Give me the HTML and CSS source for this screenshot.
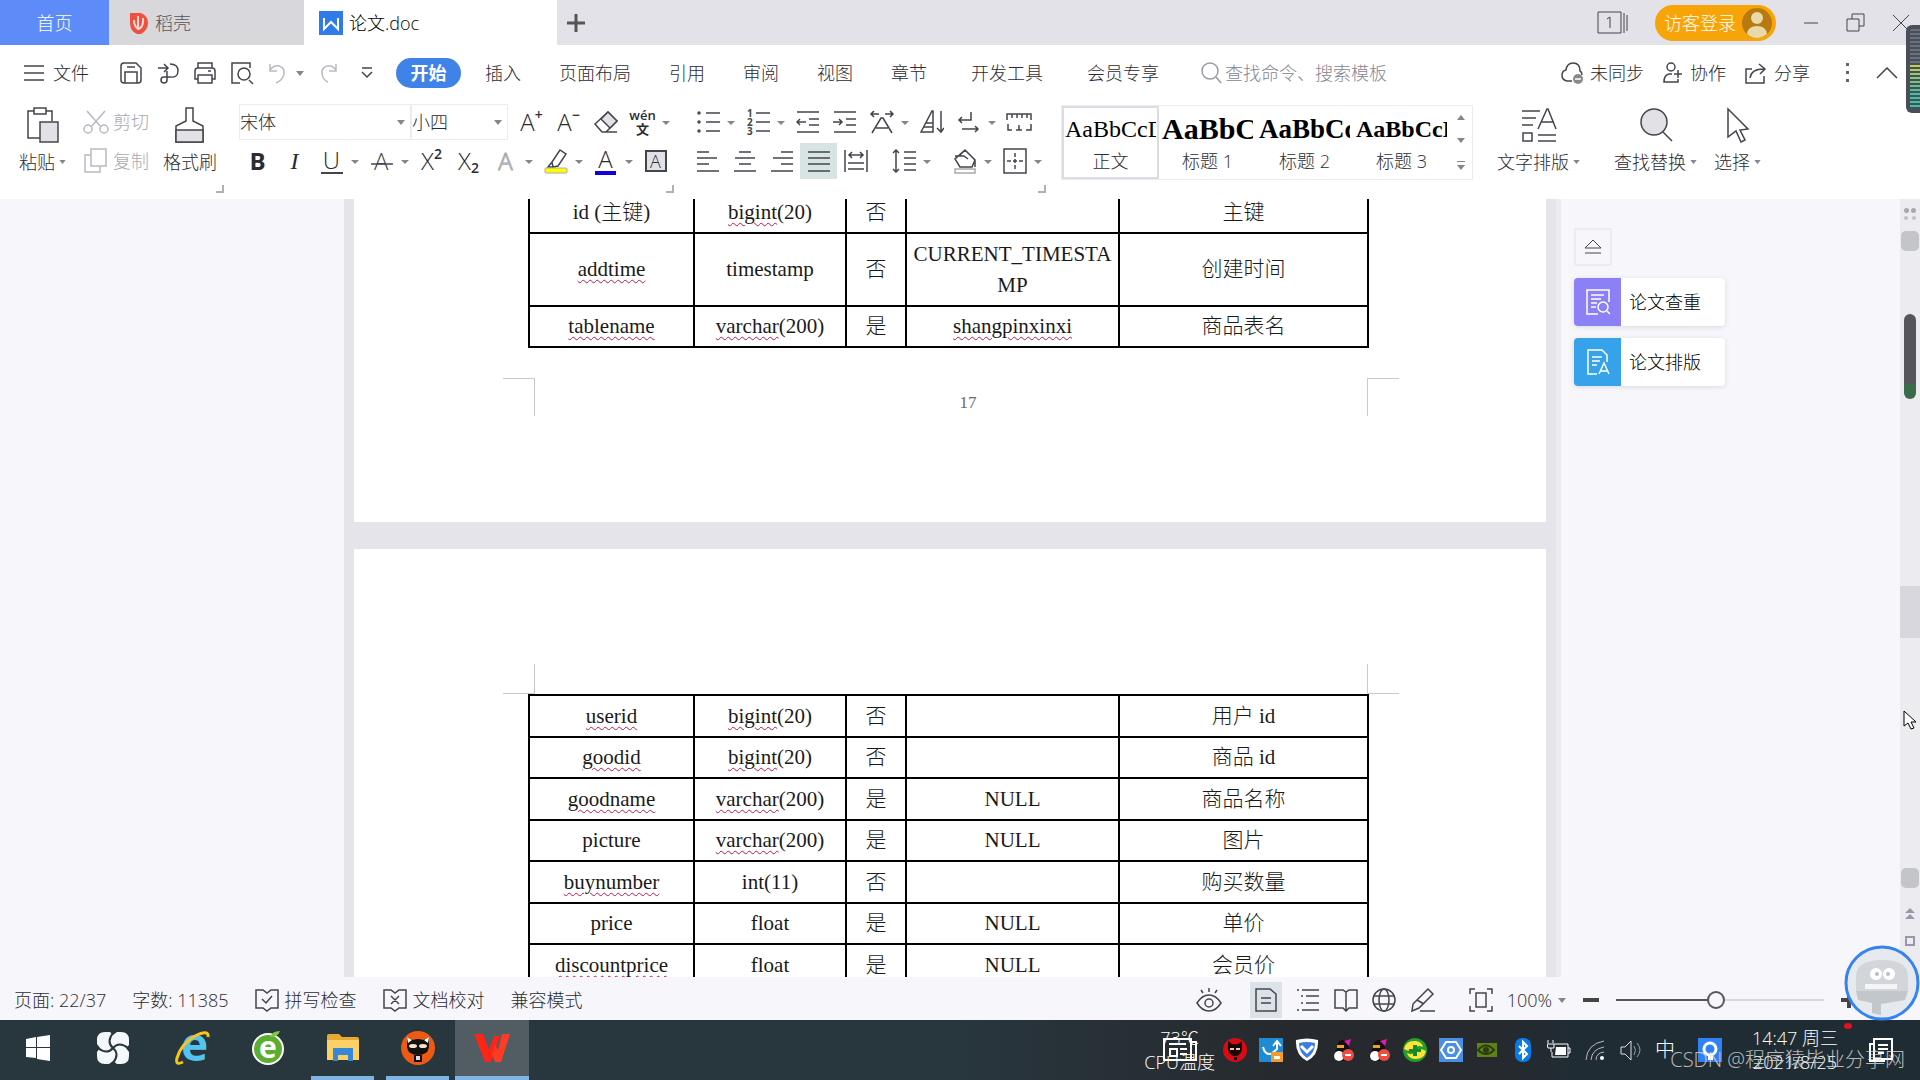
FILE: index.html
```
<!DOCTYPE html>
<html lang="zh-CN">
  <head>
    <meta charset="utf-8">
    <title>论文.doc</title>
    <link rel="stylesheet" href="styles.css">
  </head>

  <body>
    <header class="titlebar">
      <button class="tab tab-home">首页</button>
      <button class="tab tab-docer">
        <svg width="20" height="24" viewBox="0 0 20 24"><path d="M1 2h11q7 3 7 10t-7 11H8Q1 20 1 12z" fill="#f0503f"/><path d="M9 5v14M9 18q-4-3-4-9M10 18q5-3 4-11" fill="none" stroke="#fbd9d5" stroke-width="2"/></svg>
        稻壳
      </button>
      <button class="tab tab-active">
        <svg width="24" height="24" viewBox="0 0 24 24"><path d="M0 0h24v24H0z" fill="#2f7be8"/><path d="M5 7v11l7-7 7 7V7" fill="none" stroke="#fff" stroke-width="2"/></svg>
        论文.doc
      </button>
      <button class="tab-add" aria-label="新建">
        <svg width="20" height="20" viewBox="0 0 20 20"><path d="M10 1v18M1 10h18" stroke="#555" stroke-width="3"/></svg>
      </button>
      <div class="window-tools">
        <button aria-label="工作区">
          <svg width="32" height="24" viewBox="0 0 32 24" class="line"><path d="M1 1h23v21H1zM27 2v20M30 4v16M10 8l3-2v11"/></svg>
        </button>
        <button class="login">
          访客登录
          <svg width="30" height="30" viewBox="0 0 30 30"><circle cx="15" cy="15" r="15" fill="#b87a10"/><circle cx="15" cy="10" r="6" fill="#ead9a8"/><path d="M5 26q1-8 10-8t10 8q-10 8-20 0z" fill="#ead9a8"/></svg>
        </button>
        <button aria-label="最小化"><svg width="18" height="18" viewBox="0 0 18 18" class="line"><path d="M2 9h14"/></svg></button>
        <button aria-label="还原"><svg width="20" height="20" viewBox="0 0 20 20" class="line"><path d="M1 6h12v12H1zM6 6V1h12v12h-5"/></svg></button>
        <button aria-label="关闭"><svg width="18" height="18" viewBox="0 0 18 18" class="line"><path d="M1 1l16 16M17 1L1 17"/></svg></button>
      </div>
    </header>

    <nav class="menubar">
      <button class="file">
        <svg width="20" height="16" viewBox="0 0 20 16" class="line"><path d="M0 1h20M0 8h20M0 15h20"/></svg>
        文件
      </button>
      <div class="quick">
        <button aria-label="保存"><svg width="24" height="24" viewBox="0 0 24 24" class="line"><path d="M2 5q0-3 3-3h12l5 5v12q0 3-3 3H5q-3 0-3-3zM6 22V11h12v11M8 6h8"/></svg></button>
        <button aria-label="输出"><svg width="24" height="24" viewBox="0 0 24 24" class="line"><path d="M2 7h9M8 3l4 4-4 4M14 3q8 0 8 7t-8 6h-3M11 10v9q0 3-3 3t-3-3 3-3h3"/></svg></button>
        <button aria-label="打印"><svg width="24" height="24" viewBox="0 0 24 24" class="line"><path d="M5 7V2h14v5M5 18H2V10q0-3 3-3h14q3 0 3 3v8h-3M5 14h14v8H5zM15 10h3"/></svg></button>
        <button aria-label="打印预览"><svg width="24" height="24" viewBox="0 0 24 24" class="line"><path d="M10 22H2V2h18v5M19 19l4 4"/><circle cx="14" cy="13" r="6"/></svg></button>
        <button class="off" aria-label="撤销"><svg width="20" height="24" viewBox="0 0 20 24" class="line"><path d="M3 3v7h7M3 9q4-5 9-4 6 2 5 8-1 6-8 9"/></svg></button>
        <svg class="caret" width="8" height="5" viewBox="0 0 8 5"><path d="M0 0h8L4 5z"/></svg>
        <button class="off" aria-label="恢复"><svg width="20" height="24" viewBox="0 0 20 24" class="line"><path d="M17 3v7h-7M17 9q-4-5-9-4-6 2-5 8 1 6 6 8"/></svg></button>
        <button class="more" aria-label="自定义"><svg width="12" height="14" viewBox="0 0 12 14" class="line"><path d="M1 2h10M1 6l5 5 5-5"/></svg></button>
      </div>
      <button class="menu-item current">开始</button>
      <button class="menu-item">插入</button>
      <button class="menu-item">页面布局</button>
      <button class="menu-item">引用</button>
      <button class="menu-item">审阅</button>
      <button class="menu-item">视图</button>
      <button class="menu-item">章节</button>
      <button class="menu-item wide">开发工具</button>
      <button class="menu-item">会员专享</button>
      <label class="search">
        <svg width="22" height="24" viewBox="0 0 22 24" class="line"><circle cx="10" cy="10" r="8"/><path d="M16 16l5 6"/></svg>
        <input type="text" placeholder="查找命令、搜索模板" aria-label="查找命令、搜索模板">
      </label>
      <div class="share">
        <button><svg width="24" height="24" viewBox="0 0 24 24" class="line"><path d="M12 20H7q-5-1-5-6 0-4 4-5 1-7 7-7 7 0 7 8 2 1 2 4"/><circle cx="18" cy="18" r="5" fill="#888" stroke="none"/><path d="M15 18h6" stroke="#fff"/></svg>未同步</button>
        <button><svg width="22" height="24" viewBox="0 0 22 24" class="line"><circle cx="9" cy="6" r="4"/><path d="M10 13H7q-5 1-5 8h14v-3M12 13h8M16 9v8"/></svg>协作</button>
        <button><svg width="24" height="24" viewBox="0 0 24 24" class="line"><path d="M8 8H2v14h18v-7M6 17q1-9 14-9M15 3l6 5-5 5"/></svg>分享</button>
        <button class="dots" aria-label="更多"><svg width="4" height="20" viewBox="0 0 4 20"><path d="M0 0h3v3H0zM0 8h3v3H0zM0 16h3v3H0z" fill="#666"/></svg></button>
        <button aria-label="收起功能区"><svg width="22" height="12" viewBox="0 0 22 12" class="line"><path d="M1 11L11 1l10 10"/></svg></button>
      </div>
    </nav>

    <section class="ribbon">
      <div class="group clipboard">
        <button class="big">
          <svg width="34" height="36" viewBox="0 0 34 36" class="line"><path d="M8 4H2v27h12M20 4h6v10M8 1h12v6H8z"/><path d="M14 15h18v20H14z" fill="#e1e1e6"/></svg>
          <span>粘贴<svg class="caret" width="7" height="4" viewBox="0 0 8 5"><path d="M0 0h8L4 5z"/></svg></span>
        </button>
        <div class="stack">
          <button class="off"><svg width="26" height="24" viewBox="0 0 26 24" class="line"><path d="M4 1l14 16M22 1L8 17"/><circle cx="5" cy="19" r="4"/><circle cx="21" cy="19" r="4"/></svg>剪切</button>
          <button class="off"><svg width="26" height="26" viewBox="0 0 26 26" class="line"><path d="M8 1h15v17H8zM8 7H2v17h15v-6"/></svg>复制</button>
        </div>
        <button class="big brush">
          <svg width="30" height="36" viewBox="0 0 30 36" class="line"><path d="M11 1h7v13l10 5v16H1V19l10-5z"/><path d="M1 23h27v12H1z" fill="#e1e1e6"/></svg>
          <span>格式刷</span>
        </button>
        <i class="corner"></i>
      </div>

      <div class="group font">
        <div class="row">
          <div class="field family"><select aria-label="字体"><option>宋体</option></select><svg class="caret" width="8" height="5" viewBox="0 0 8 5"><path d="M0 0h8L4 5z"/></svg></div>
          <div class="field size"><select aria-label="字号"><option>小四</option></select><svg class="caret" width="8" height="5" viewBox="0 0 8 5"><path d="M0 0h8L4 5z"/></svg></div>
          <button class="tool letter" aria-label="增大字号">A<sup>+</sup></button>
          <button class="tool letter" aria-label="减小字号">A<sup>−</sup></button>
          <button class="tool" aria-label="清除格式"><svg width="24" height="24" viewBox="0 0 24 24" class="line"><path d="M1 14L14 2l9 9-11 11H8zM10 22h13"/><path d="M7 9l9 9 7-7-9-9z" fill="#e1e1e6"/></svg></button>
          <button class="tool drop wen" aria-label="拼音指南"><span>wén<br>文</span></button>
        </div>
        <div class="row">
          <button class="tool letter bold" aria-label="加粗">B</button>
          <button class="tool letter italic" aria-label="倾斜">I</button>
          <button class="tool drop letter" aria-label="下划线"><span class="under">U</span></button>
          <button class="tool drop" aria-label="删除线"><svg width="24" height="26" viewBox="0 0 24 26" class="line"><text x="4" y="22" class="struck">A</text><path d="M1 16h22"/></svg></button>
          <button class="tool letter" aria-label="上标">X<sup>2</sup></button>
          <button class="tool letter" aria-label="下标">X<sub>2</sub></button>
          <button class="tool drop letter outline" aria-label="文字效果"><span>A</span></button>
          <button class="tool drop" aria-label="突出显示"><svg width="24" height="26" viewBox="0 0 24 26" class="line"><path d="M8 14L16 2l6 4-8 12-5 1zM8 14l-4 5h5"/><rect x="1" y="20" width="22" height="5" rx="1" fill="#ff0" stroke="#aaa" stroke-width="1"/></svg></button>
          <button class="tool drop letter" aria-label="字体颜色"><span class="color">A</span></button>
          <button class="tool letter" aria-label="字符底纹"><span class="boxed">A</span></button>
        </div>
        <i class="corner"></i>
      </div>

      <div class="group">
        <div class="row">
          <button class="tool drop" aria-label="项目符号"><svg width="24" height="24" viewBox="0 0 24 24" class="line"><path d="M10 3h14M10 12h14M10 21h14"/><circle cx="3" cy="3" r="1"/><circle cx="3" cy="12" r="1"/><circle cx="3" cy="21" r="1"/></svg></button>
          <button class="tool drop" aria-label="编号"><svg width="24" height="26" viewBox="0 0 24 26" class="line"><path d="M10 4h14M10 13h14M10 22h14"/><g class="digits"><text x="1" y="8">1</text><text x="1" y="17">2</text><text x="1" y="26">3</text></g></svg></button>
          <button class="tool" aria-label="减少缩进"><svg width="24" height="24" viewBox="0 0 24 24" class="line"><path d="M1 2h22M13 9h10M13 15h10M1 22h22M1 12h9M4 9l-3 3 3 3"/></svg></button>
          <button class="tool" aria-label="增加缩进"><svg width="24" height="24" viewBox="0 0 24 24" class="line"><path d="M1 2h22M13 9h10M13 15h10M1 22h22M0 12h9M6 9l3 3-3 3"/></svg></button>
          <button class="tool drop" aria-label="中文版式"><svg width="26" height="24" viewBox="0 0 26 24" class="line"><path d="M3 23L12 8h2l9 15M7 18h12M10 4H2M5 1L2 4l3 3M16 4h8M21 1l3 3-3 3"/></svg></button>
          <button class="tool" aria-label="排序"><svg width="24" height="24" viewBox="0 0 24 24" class="line"><path d="M1 22L12 1h1v21zM6 13h7M4 17h9M21 1v21M17 18l4 4 3-4"/></svg></button>
          <button class="tool drop" aria-label="换行"><svg width="24" height="24" viewBox="0 0 24 24" class="line"><path d="M14 2v8H2M5 7l-3 3 3 3M5 19h16M18 16l3 3-3 3"/></svg></button>
          <button class="tool" aria-label="制表位"><svg width="26" height="20" viewBox="0 0 26 20" class="line"><path d="M1 8V2h24v6M6 2v4M11 2v4M16 2v4M21 2v4M2 12v6h4M10 18h6M13 18v-5M20 18h5v-6"/></svg></button>
        </div>
        <div class="row">
          <button class="tool" aria-label="左对齐"><svg width="24" height="24" viewBox="0 0 24 24" class="line"><path d="M1 3h12M1 9h20M1 15h12M1 22h22"/></svg></button>
          <button class="tool" aria-label="居中"><svg width="24" height="24" viewBox="0 0 24 24" class="line"><path d="M6 3h12M2 9h20M6 15h12M1 22h22"/></svg></button>
          <button class="tool" aria-label="右对齐"><svg width="24" height="24" viewBox="0 0 24 24" class="line"><path d="M11 3h12M3 9h20M11 15h12M1 22h22"/></svg></button>
          <button class="tool pressed" aria-label="两端对齐"><svg width="24" height="24" viewBox="0 0 24 24" class="line"><path d="M1 3h22M1 9h22M1 15h22M1 22h22"/></svg></button>
          <button class="tool" aria-label="分散对齐"><svg width="24" height="24" viewBox="0 0 24 24" class="line"><path d="M1 1v22M23 1v22M4 14h16M4 20h16M5 6h14M8 3L5 6l3 3M16 3l3 3-3 3"/></svg></button>
          <button class="tool drop spaced" aria-label="行距"><svg width="24" height="24" viewBox="0 0 24 24" class="line"><path d="M4 1v22M1 4l3-3 3 3M1 20l3 3 3-3M12 3h12M12 9h12M12 15h12M12 21h12"/></svg></button>
          <button class="tool drop spaced" aria-label="底纹颜色"><svg width="24" height="26" viewBox="0 0 24 26" class="line"><path d="M12 2l10 10-3 7H7l-5-8zM12 2L7 7M2 8h9l4 3M22 12v7"/><path d="M2 21h20v4H2z" stroke="#aaa"/></svg></button>
          <button class="tool drop" aria-label="边框"><svg width="24" height="26" viewBox="0 0 24 26" class="line"><path d="M1 1h22v24H1z"/><path d="M12 5v16M4 13h16" stroke-dasharray="4 2"/></svg></button>
        </div>
        <i class="corner"></i>
      </div>

      <div class="gallery">
        <button class="style chosen"><b class="sample body">AaBbCcDd</b>正文</button>
        <button class="style"><b class="sample h1">AaBbCc</b>标题 1</button>
        <button class="style"><b class="sample h2">AaBbCc</b>标题 2</button>
        <button class="style"><b class="sample h3">AaBbCcD</b>标题 3</button>
        <div class="scroller">
          <button aria-label="上一行"><svg class="caret" width="8" height="5" viewBox="0 0 8 5"><path d="M0 5h8L4 0z"/></svg></button>
          <button aria-label="下一行"><svg class="caret" width="8" height="5" viewBox="0 0 8 5"><path d="M0 0h8L4 5z"/></svg></button>
          <button aria-label="展开样式"><svg class="caret" width="8" height="9" viewBox="0 0 8 9"><path d="M0 0h8v1H0zM0 4h8L4 9z"/></svg></button>
        </div>
      </div>

      <div class="edit">
        <button class="big">
          <svg width="36" height="36" viewBox="0 0 36 36" class="line"><path d="M1 4h18M1 11h14M1 18h11M17 22L26 2h1l8 20M20 15h13M17 28h18M17 34h18"/><path d="M2 26h9v8H2z"/></svg>
          <span>文字排版<svg class="caret" width="7" height="4" viewBox="0 0 8 5"><path d="M0 0h8L4 5z"/></svg></span>
        </button>
        <button class="big">
          <svg width="36" height="36" viewBox="0 0 36 36" class="line"><circle cx="16" cy="15" r="13" fill="#e1e1e6"/><path d="M25 25l9 9"/></svg>
          <span>查找替换<svg class="caret" width="7" height="4" viewBox="0 0 8 5"><path d="M0 0h8L4 5z"/></svg></span>
        </button>
        <button class="big narrow">
          <svg width="26" height="36" viewBox="0 0 26 36" class="line"><path d="M3 2l20 20-8 1 5 10-4 2-5-11-8 6z"/></svg>
          <span>选择<svg class="caret" width="7" height="4" viewBox="0 0 8 5"><path d="M0 0h8L4 5z"/></svg></span>
        </button>
      </div>
    </section>

    <main class="workspace">
      <div class="canvas">
        <div class="pages">
          <article class="page">
            <table class="schema cut">
              <colgroup><col class="c1"><col class="c2"><col class="c3"><col class="c4"><col class="c5"></colgroup>
              <tr><td>id (主键)</td><td><u>bigint</u>(20)</td><td>否</td><td></td><td>主键</td></tr>
              <tr><td><u>addtime</u></td><td>timestamp</td><td>否</td><td>CURRENT_TIMESTA<br>MP</td><td>创建时间</td></tr>
              <tr><td><u>tablename</u></td><td><u>varchar</u>(200)</td><td>是</td><td><u>shangpinxinxi</u></td><td>商品表名</td></tr>
            </table>
            <footer class="marks bottom"><i></i><span>17</span><i></i></footer>
          </article>
          <article class="page">
            <header class="marks top"><i></i><i></i></header>
            <table class="schema">
              <colgroup><col class="c1"><col class="c2"><col class="c3"><col class="c4"><col class="c5"></colgroup>
              <tr><td><u>userid</u></td><td><u>bigint</u>(20)</td><td>否</td><td></td><td>用户 id</td></tr>
              <tr><td><u>goodid</u></td><td><u>bigint</u>(20)</td><td>否</td><td></td><td>商品 id</td></tr>
              <tr><td><u>goodname</u></td><td><u>varchar</u>(200)</td><td>是</td><td>NULL</td><td>商品名称</td></tr>
              <tr><td>picture</td><td><u>varchar</u>(200)</td><td>是</td><td>NULL</td><td>图片</td></tr>
              <tr><td><u>buynumber</u></td><td>int(11)</td><td>否</td><td></td><td>购买数量</td></tr>
              <tr><td>price</td><td>float</td><td>是</td><td>NULL</td><td>单价</td></tr>
              <tr><td><u>discountprice</u></td><td>float</td><td>是</td><td>NULL</td><td>会员价</td></tr>
            </table>
          </article>
        </div>
        <aside class="side">
          <button class="eject" aria-label="收起"><svg width="18" height="18" viewBox="0 0 18 18" class="line"><path d="M1 10l8-8 8 8zM1 15h16"/></svg></button>
          <button class="helper">
            <span class="badge violet"><svg width="28" height="28" viewBox="0 0 28 28" class="line"><path d="M14 26H3V2h22v12M7 7h13M7 11h10M7 15h6M7 19h5M23 23l3 3"/><circle cx="19" cy="19" r="5"/></svg></span>
            论文查重
          </button>
          <button class="helper">
            <span class="badge blue"><svg width="28" height="28" viewBox="0 0 28 28" class="line"><path d="M13 26H4V2h14l5 5v7M8 9h10M8 13h8M8 17h5M15 26l5-11 5 11M17 23h7"/></svg></span>
            论文排版
          </button>
        </aside>
      </div>
      <div class="scrollbar">
        <i class="ruler-btn"></i>
        <i class="arrow-up"></i>
        <i class="thumb"></i>
        <i class="ghost"></i>
        <i class="arrow-down"></i>
        <svg width="10" height="48" viewBox="0 0 10 48"><path d="M0 5l5-5 5 5zM0 11l5-5 5 5z" fill="#9a98a8"/><path d="M1 29h8v8H1z" fill="none" stroke="#9a98a8" stroke-width="2"/></svg>
      </div>
    </main>

    <footer class="status">
      <span>页面: 22/37</span>
      <span>字数: 11385</span>
      <button><svg width="24" height="24" viewBox="0 0 24 24" class="line"><path d="M1 2h7l4 3 4-3h7v18h-7l-4 3-4-3H1zM7 11l4 4 6-7"/></svg>拼写检查</button>
      <button><svg width="24" height="24" viewBox="0 0 24 24" class="line"><path d="M1 2h7l4 3 4-3h7v18h-7l-4 3-4-3H1zM8 8l8 8M16 8l-8 8"/></svg>文档校对</button>
      <span>兼容模式</span>
      <div class="views">
        <button aria-label="护眼模式"><svg width="26" height="26" viewBox="0 0 26 26" class="line"><path d="M1 16q5-8 12-8t12 8q-5 8-12 8T1 16zM13 1v4M5 3l2 3M21 3l-2 3"/><circle cx="13" cy="16" r="4"/></svg></button>
        <button class="pressed" aria-label="页面视图"><svg width="24" height="24" viewBox="0 0 24 24" class="line"><path d="M2 1h14l6 5v17H2zM7 10h10M7 15h10"/></svg></button>
        <button aria-label="大纲"><svg width="24" height="24" viewBox="0 0 24 24" class="line"><path d="M6 2h17M10 8h13M10 15h13M6 22h17M1 2h2M5 8h2M5 15h2M1 22h2"/></svg></button>
        <button aria-label="阅读版式"><svg width="24" height="24" viewBox="0 0 24 24" class="line"><path d="M1 2h8l3 2 3-2h8v18h-8l-3 3-3-3H1zM12 4v18"/></svg></button>
        <button aria-label="Web 版式"><svg width="24" height="24" viewBox="0 0 24 24" class="line"><circle cx="12" cy="12" r="11"/><ellipse cx="12" cy="12" rx="5" ry="11"/><path d="M2 8h20M2 16h20"/></svg></button>
        <button aria-label="写作模式"><svg width="26" height="26" viewBox="0 0 26 26" class="line"><path d="M3 17L18 2l5 5L9 21l-7 3zM7 13l7 4M10 24h15"/></svg></button>
        <button class="fit" aria-label="适合页面"><svg width="24" height="24" viewBox="0 0 24 24" class="line"><path d="M1 6V1h5M18 1h5v5M23 18v5h-5M6 23H1v-5M7 5h10v14H7z"/></svg></button>
        <div class="zoom-bar">
          <button>100%<svg class="caret" width="8" height="5" viewBox="0 0 8 5"><path d="M0 0h8L4 5z"/></svg></button>
          <button aria-label="缩小"><svg width="16" height="16" viewBox="0 0 16 16"><path d="M0 6h16v4H0z" fill="#444"/></svg></button>
          <input class="zoom" type="range" min="0" max="100" value="48" aria-label="缩放">
          <button aria-label="放大"><svg width="16" height="16" viewBox="0 0 16 16"><path d="M0 6h6V0h4v6h6v4h-6v6H6v-6H0z" fill="#444"/></svg></button>
        </div>
      </div>
    </footer>

    <footer class="taskbar">
      <button class="app" aria-label="开始菜单"><svg width="26" height="26" viewBox="0 0 26 26"><path d="M1 4l10-2v10H1zM12 2l13-2v12H12zM1 13h10v10L1 22zM12 13h13v13l-13-2z" fill="#fff"/></svg></button>
      <button class="app" aria-label="花瓣"><svg width="34" height="34" viewBox="0 0 34 34"><path d="M9 1h5l3 3 4-3h4q8 0 8 8v5l-3 3 3 4v4q0 8-8 8h-4l-4-3-4 3H9q-8 0-8-8v-4l3-4-3-4V9q0-8 8-8z" fill="#f4f8fc"/><path d="M17 2Q10 11 17 17M32 17Q23 10 17 17M17 32Q24 23 17 17M2 17Q11 24 17 17" fill="none" stroke="#29363d" stroke-width="2"/></svg></button>
      <button class="app ie-app" aria-label="Internet Explorer"><svg width="36" height="36" viewBox="0 0 36 36"><text x="6" y="31" class="ie">e</text><path d="M8 32q-8 4-6-4Q6 14 20 6q14-7 13 1" fill="none" stroke="#f7c51e" stroke-width="3"/></svg></button>
      <button class="app" aria-label="浏览器"><svg width="36" height="36" viewBox="0 0 36 36"><circle cx="18" cy="19" r="15" fill="#5cae2e" stroke="#fff" stroke-width="2"/><path d="M20 7q2-6 10-6-2 6-10 6z" fill="#7ccb45"/><text x="9" y="28" class="green-e">e</text></svg></button>
      <button class="app open" aria-label="文件资源管理器"><svg width="34" height="30" viewBox="0 0 34 30"><path d="M1 3q0-2 2-2h10l3 3h15q2 0 2 2v20H1z" fill="#e9a82f"/><path d="M1 7h32v20H1z" fill="#fbd066"/><path d="M7 15h20v13h-5v-6H12v6H7z" fill="#3588d8"/></svg></button>
      <button class="app open" aria-label="猫头"><svg width="36" height="36" viewBox="0 0 36 36"><circle cx="18" cy="18" r="17" fill="#ec5a14"/><path d="M7 7l6 3q5-2 10 0l6-3v10q-1 8-11 8T7 17z" fill="#111"/><path d="M7 7l5 3-4 3zM29 7l-5 3 4 3z" fill="#fff"/><ellipse cx="13" cy="16" rx="4" ry="2" fill="#fbe0cb"/><ellipse cx="23" cy="16" rx="4" ry="2" fill="#fbe0cb"/><path d="M14 25h8v7h-8z" fill="#111"/><path d="M16 26h4v4h-4z" fill="#ddd"/></svg></button>
      <button class="app open focus" aria-label="WPS"><svg width="38" height="30" viewBox="0 0 38 30"><path d="M1 1h9l6 16 5-14h6l-9 26h-6z" fill="#ff2418"/><path d="M29 1h8l-9 28h-6l-3-8 3-9 3 5z" fill="#ff3b22"/></svg></button>

      <div class="tray">
        <div class="cpu">
          <span>73℃</span>
          <span>CPU温度</span>
          <svg width="36" height="26" viewBox="0 0 36 26"><path d="M2 2h27v21H2zM29 5h5v18H2M7 7h17M8 12h7v7H8zM18 12h7M18 17h7" fill="none" stroke="#fff" stroke-width="2"/></svg>
        </div>
        <svg width="24" height="24" viewBox="0 0 24 24"><circle cx="12" cy="12" r="12" fill="#d90b12"/><path d="M5 3l4 3h6l4-3v9q-2 6-7 6t-7-6z" fill="#1a0606"/><path d="M7 10h4v2H7zM13 10h4v2h-4z" fill="#f3c8ab"/><path d="M11 19h3v3h-3z" fill="#1a0606"/></svg>
        <svg width="24" height="24" viewBox="0 0 24 24"><path d="M0 0h24v24H0z" fill="#1e8bd4"/><path d="M4 9q2 8 8 7l6-5V4M14 8l4-5 4 5" fill="none" stroke="#fff" stroke-width="2"/><path d="M12 14h12v10H12z" fill="#f19a31"/><path d="M15 18h6v3h-6z" fill="#fff"/></svg>
        <svg width="24" height="24" viewBox="0 0 24 24"><path d="M1 2q11-3 22 0 1 15-11 21Q0 17 1 2z" fill="#fff"/><path d="M4 5q8-2 16 0 0 10-8 15Q4 15 4 5z" fill="#3b7de6"/><path d="M6 8l6 6 6-6" fill="none" stroke="#fff" stroke-width="3"/></svg>
        <svg width="24" height="24" viewBox="0 0 24 24"><path d="M6 10q0-8 6-8t6 8l3 8-5 5H6l-4-4z" fill="#111"/><path d="M13 3l7-2-2 7z" fill="#e01bb0"/><ellipse cx="8" cy="18" rx="5" ry="5" fill="#fff"/><path d="M6 7h7v3H6z" fill="#f4a020"/><circle cx="17" cy="17" r="6" fill="#ef4b41"/><path d="M14 16h6v2h-6z" fill="#fff"/></svg>
        <svg width="24" height="24" viewBox="0 0 24 24"><path d="M6 10q0-8 6-8t6 8l3 8-5 5H6l-4-4z" fill="#111"/><path d="M13 3l7-2-2 7z" fill="#e01bb0"/><ellipse cx="8" cy="18" rx="5" ry="5" fill="#fff"/><path d="M6 7h7v3H6z" fill="#f4a020"/><circle cx="17" cy="17" r="6" fill="#ef4b41"/><path d="M14 16h6v2h-6z" fill="#fff"/></svg>
        <svg width="24" height="24" viewBox="0 0 24 24"><circle cx="12" cy="12" r="12" fill="#22a02c"/><path d="M1 11Q3 2 13 3q6 1 7 6-6-3-9 2-3 4-10 0zM23 13q-2 9-12 8-6-1-7-6 6 3 9-2 3-4 10 0z" fill="#ffe13a"/><path d="M10 7h4v4h4v3h-4v4h-4v-4H6v-3h4z" fill="#138a26"/></svg>
        <svg width="24" height="24" viewBox="0 0 24 24"><path d="M0 0h24v24H0z" fill="#4a8fe6"/><path d="M7 4h10l5 8-5 8H7l-5-8z" fill="none" stroke="#fff" stroke-width="2"/><circle cx="12" cy="12" r="3" fill="none" stroke="#fff" stroke-width="2"/></svg>
        <svg width="24" height="24" viewBox="0 0 24 24"><path d="M2 5h20v14H2z" fill="#5c8414"/><path d="M3 12q8-9 16 0-8 8-16 0z" fill="none" stroke="#2d3b12" stroke-width="2"/><circle cx="11" cy="12" r="3" fill="#2d3b12"/></svg>
        <svg width="24" height="24" viewBox="0 0 24 24"><rect x="4" width="16" height="24" rx="7" fill="#0a7be6"/><path d="M8 8l8 8-4 4V4l4 4-8 8" fill="none" stroke="#fff" stroke-width="2"/></svg>
        <svg width="24" height="24" viewBox="0 0 24 24"><path d="M7 6h14v13H5v-5M21 10h2v5h-2M1 2v3M6 2v3M0 6h7v4H1zM4 10v4" fill="none" stroke="#fff" stroke-width="1"/><path d="M9 9h10v8H8z" fill="#fff"/></svg>
        <svg width="24" height="24" viewBox="0 0 24 24"><path d="M3 22Q4 6 21 3M8 22q1-11 13-13M13 22q0-7 8-8" fill="none" stroke="#bbb" stroke-width="1"/><circle cx="19" cy="20" r="2" fill="#fff"/></svg>
        <svg width="24" height="24" viewBox="0 0 24 24"><path d="M2 9h4l6-6v19l-6-6H2z" fill="none" stroke="#ddd" stroke-width="1"/><path d="M15 8q3 4 0 9M18 5q6 7 0 14" fill="none" stroke="#999" stroke-width="1"/></svg>
        <span class="ime">中</span>
        <svg class="finder" width="24" height="24" viewBox="0 0 24 24"><path d="M0 0h24v24H0z" fill="#2f82f2"/><circle cx="12" cy="11" r="6" fill="none" stroke="#fff" stroke-width="3"/><path d="M10 17h5v5h-5z" fill="#fff"/></svg>
        <div class="clock"><time>14:47 周三</time><time>2021/8/25</time></div>
        <svg width="26" height="26" viewBox="0 0 26 26"><path d="M6 2h18v20H6zM6 7H2v17h15M10 8h10M10 12h10M10 16h6" fill="none" stroke="#fff" stroke-width="2"/></svg>
      </div>
    </footer>

    <div class="watermark">CSDN @程序猿毕业分享网</div>
    <i class="alert-dot"></i>
    <div class="meter"></div>
    <svg class="pointer" width="14" height="20" viewBox="0 0 14 20"><path d="M1 1v15l4-3 3 6 3-1-3-6h5z" fill="#fff" stroke="#000"/></svg>
    <svg class="robot" width="76" height="76" viewBox="0 0 76 76">
      <circle cx="38" cy="38" r="36" fill="#e6eaee"/>
      <path d="M12 46V32q0-17 26-17t26 17v14l-8 8H18z" fill="#d2d6da"/>
      <path d="M12 46h52l-3 9-24 4v11l-9-2V58l-14-3z" fill="#c2c7cb"/>
      <circle cx="32" cy="29" r="6" fill="#fff"/><circle cx="45" cy="29" r="6" fill="#fff"/>
      <circle cx="33" cy="29" r="2" fill="#b9bfc3"/><circle cx="44" cy="29" r="2" fill="#b9bfc3"/>
      <path d="M21 39h32v5H21z" fill="#f4f5f6"/>
      <circle cx="38" cy="38" r="36" fill="none" stroke="#3583f0" stroke-width="3"/>
    </svg>
  </body>
</html>
```
FILE: styles.css
```
* {
  box-sizing: border-box;
}

body {
  margin: 0;
  height: 100vh;
  display: flex;
  flex-direction: column;
  overflow: hidden;
  position: relative;
  background-color: white;
  color: #2b2b33;
  font-family: "Open Sans", "Noto Sans CJK SC", sans-serif;
  font-size: 18px;
  font-weight: 300;
  line-height: 24px;
}

button,
input,
select {
  font: inherit;
  color: inherit;
  background: none;
  border: none;
  padding: 0;
  margin: 0;
}

button {
  display: flex;
  align-items: center;
  justify-content: center;
  flex-shrink: 0;
  white-space: nowrap;
  cursor: pointer;
}

svg {
  flex-shrink: 0;
  display: block;
}

.line {
  fill: none;
  stroke: #44444c;
  stroke-width: 1.5;
}

.caret {
  fill: #85858c;
}

.off {
  color: #a9a9b2;
}

.off .line {
  stroke: #b9b9c2;
}

/* title bar */
.titlebar {
  display: flex;
  height: 45px;
  background-color: #e3e2e8;
  flex-shrink: 0;
}

.tab {
  gap: 6px;
  justify-content: flex-start;
}

.tab-home {
  width: 109px;
  justify-content: center;
  background-color: #5d8bf8;
  color: white;
}

.tab-docer {
  width: 195px;
  padding-left: 20px;
  background-color: #d8d7dc;
  color: #55555c;
}

.tab-active {
  width: 253px;
  padding-left: 15px;
  background-color: white;
  color: black;
}

.tab-add {
  width: 38px;
}

.window-tools {
  display: flex;
  align-items: center;
  gap: 26px;
  margin-left: auto;
  padding-right: 10px;
}

.window-tools .line {
  stroke-width: 1;
}

.login {
  height: 36px;
  gap: 6px;
  padding: 0 4px 0 9px;
  border-radius: 18px;
  background-color: #f7a408;
  color: white;
}

/* menu */
.menubar {
  display: flex;
  align-items: center;
  height: 56px;
  flex-shrink: 0;
}

.file {
  gap: 9px;
  margin-left: 24px;
}

.quick {
  display: flex;
  align-items: center;
  gap: 13px;
  margin: 0 18px 0 30px;
}

.quick .caret {
  margin: 0 2px 0 -4px;
}

.more {
  margin: 0 5px 0 9px;
}

.menu-item {
  height: 30px;
  padding: 0 19px;
}

.menu-item.wide {
  padding: 0 25px;
}

.menu-item.current {
  width: 65px;
  padding: 0;
  margin-right: 5px;
  border-radius: 15px;
  background-color: #3f83e8;
  color: white;
  font-weight: 700;
}

.search {
  display: flex;
  align-items: center;
  gap: 3px;
  margin-left: 22px;
}

.search .line {
  stroke: #9a9aa6;
}

.search input {
  width: 180px;
}

.search input::placeholder {
  color: #858592;
}

.share {
  display: flex;
  align-items: center;
  gap: 18px;
  margin-left: auto;
  padding-right: 22px;
}

.share button {
  gap: 6px;
}

.share .dots {
  margin: 0 8px 0 18px;
}

/* ribbon */
.ribbon {
  display: flex;
  height: 98px;
  padding-top: 2px;
  gap: 15px;
  flex-shrink: 0;
}

.group {
  position: relative;
  display: flex;
  flex-direction: column;
  gap: 1px;
}

.corner {
  position: absolute;
  right: 0;
  bottom: 6px;
  width: 8px;
  height: 8px;
  border-right: 2px solid #b0b0b8;
  border-bottom: 2px solid #b0b0b8;
}

.clipboard {
  flex-direction: row;
  width: 224px;
  padding-left: 19px;
}

.big {
  flex-direction: column;
  justify-content: flex-start;
  gap: 7px;
  padding-top: 4px;
  height: 77px;
}

.big span {
  display: flex;
  align-items: center;
  gap: 4px;
}

.brush {
  margin-left: 13px;
}

.stack {
  display: flex;
  flex-direction: column;
  gap: 1px;
  margin-left: 16px;
}

.stack button {
  height: 38px;
  gap: 4px;
}

.row {
  display: flex;
  align-items: center;
  height: 38px;
}

.field {
  display: flex;
  align-items: center;
  height: 36px;
  padding-right: 5px;
  border: 1px solid #ebebf1;
}

.field select {
  flex: 1;
  appearance: none;
}

.family {
  width: 172px;
}

.size {
  width: 97px;
  margin-right: 5px;
}

.tool {
  width: 37px;
  height: 36px;
}

/* icon keeps its place, the arrow sits in the extra width */
.drop {
  width: 50px;
  padding-right: 13px;
  position: relative;
}

.drop::after {
  content: "";
  position: absolute;
  right: 4px;
  top: 17px;
  border: 4px solid transparent;
  border-top-color: #85858c;
}

.spaced {
  margin-left: 11px;
}

.pressed {
  background-color: #d8e4e4;
}

.letter {
  font-size: 24px;
}

.letter sup,
.letter sub {
  font-size: 14px;
  font-weight: 600;
  line-height: 16px;
}

.letter sup {
  align-self: flex-start;
  margin-top: 3px;
}

.letter sub {
  align-self: flex-end;
  margin-bottom: 3px;
}

.bold {
  font-weight: 700;
}

.italic {
  font-family: "Liberation Serif", serif;
  font-style: italic;
}

.under {
  width: 22px;
  border-bottom: 2px solid #44444c;
}

.struck {
  fill: #44444c;
  stroke: none;
  font-size: 24px;
}

.outline {
  color: white;
  -webkit-text-stroke: 1px #a9a9b2;
}

.color {
  width: 21px;
  border-bottom: 4px solid #1400d8;
}

.boxed {
  width: 22px;
  height: 22px;
  border: 2px solid #44444c;
  background-color: #e1e1e6;
  font-size: 18px;
  line-height: 18px;
}

.wen {
  font-size: 13px;
  font-weight: 600;
  line-height: 14px;
}

.digits {
  fill: #44444c;
  stroke: none;
  font-size: 10px;
  font-weight: 700;
}

/* style gallery */
.gallery {
  display: flex;
  height: 75px;
  margin-top: 2px;
  border: 1px solid #ebebf1;
}

.style {
  width: 97px;
  padding: 2px;
  flex-direction: column;
  justify-content: flex-start;
  gap: 1px;
}

.chosen {
  border: 2px solid #dcdce2;
  padding: 0;
}

.sample {
  display: block;
  width: 91px;
  height: 40px;
  overflow: hidden;
  color: black;
  font-family: "Liberation Serif", serif;
  font-weight: 700;
  text-align: left;
  line-height: 42px;
}

.body {
  font-size: 24px;
  font-weight: 400;
}

.h1 {
  font-size: 30px;
}

.h2 {
  font-size: 27px;
}

.h3 {
  font-size: 24px;
}

.scroller {
  display: flex;
  flex-direction: column;
  justify-content: space-around;
  width: 22px;
}

.edit {
  display: flex;
  gap: 34px;
  margin-left: 9px;
}

.narrow {
  margin-left: -17px;
}

/* document */
.workspace {
  display: flex;
  flex: 1;
  min-height: 0;
  overflow: hidden;
  background-color: #f6f6fb;
}

.canvas {
  flex: 1;
  display: grid;
  grid-template-columns: 1fr auto 1fr;
}

.pages {
  grid-column: 2;
  display: flex;
  flex-direction: column;
  gap: 27px;
  padding: 0 10px;
  background-color: #e4e4ea;
  box-shadow: 5px 0 0 #ebebf0;
}

.page {
  width: 1192px;
  background-color: white;
}

.page:first-child {
  height: 323px;
}

.page:last-child {
  flex: 1;
}

.schema {
  margin: 0 0 0 174px;
  width: 841px;
  table-layout: fixed;
  border-collapse: collapse;
  color: #1a1a1a;
  font-family: "Liberation Serif", "Noto Sans CJK SC", serif;
  font-size: 21px;
  font-weight: 300;
  line-height: 31px;
  text-align: center;
}

.cut {
  margin-top: -8px;
}

.schema td {
  padding: 4px 0;
  border: 2px solid black;
}

.cut tr:nth-child(2) {
  height: 73px;
}

.page:last-child tr:nth-child(odd) {
  height: 42px;
}

.schema u {
  text-decoration: underline wavy #c01848 1px;
  text-underline-offset: 3px;
}

.c1 {
  width: 165px;
}

.c2 {
  width: 152px;
}

.c3 {
  width: 60px;
}

.c4 {
  width: 213px;
}

.marks {
  display: flex;
  justify-content: space-between;
  margin: 0 147px 0 149px;
}

.marks i {
  width: 32px;
  border: 0 solid #c9c9d6;
}

.marks i:first-child {
  border-right-width: 1px;
}

.marks i:last-child {
  border-left-width: 1px;
}

.bottom {
  height: 38px;
  margin-top: 30px;
}

.bottom i {
  border-top-width: 1px;
}

.bottom span {
  padding: 13px 0 0 34px;
  color: #6a6a72;
  font-family: "Liberation Serif", serif;
  font-size: 17px;
}

.top {
  height: 30px;
  margin-top: 115px;
}

.top i {
  border-bottom-width: 1px;
}

.side {
  display: flex;
  flex-direction: column;
  align-items: flex-start;
  gap: 12px;
  padding: 29px 0 0 18px;
}

.eject {
  width: 38px;
  height: 38px;
  border: 2px solid #ececf0;
}

.eject .line {
  stroke-width: 1;
}

.helper {
  width: 151px;
  height: 48px;
  justify-content: flex-start;
  gap: 8px;
  border-radius: 4px;
  background-color: white;
  box-shadow: 0 1px 5px #d8d8e0;
  color: black;
}

.badge {
  display: flex;
  align-items: center;
  justify-content: center;
  width: 47px;
  height: 48px;
  border-radius: 4px 0 0 4px;
}

.badge .line {
  stroke: white;
}

.violet {
  background-color: #8b80f5;
}

.blue {
  background-color: #35a2ea;
}

.scrollbar {
  display: flex;
  flex-direction: column;
  align-items: center;
  width: 20px;
  background-color: #ebebf0;
}

.ruler-btn {
  width: 12px;
  height: 12px;
  margin-top: 9px;
  border-top: 5px dotted #a8a8b0;
  border-bottom: 4px dotted #c0c0c8;
}

.arrow-up,
.arrow-down {
  width: 18px;
  height: 20px;
  border-radius: 5px;
  background-color: #c4c4cb;
}

.arrow-up {
  margin-top: 11px;
}

.thumb {
  width: 12px;
  height: 85px;
  margin-top: 63px;
  border-radius: 6px;
  background: linear-gradient(#55555a 82%, #3c6b4c 82%);
}

.ghost {
  width: 20px;
  height: 52px;
  margin-top: 187px;
  background-color: #d7d7dd;
}

.arrow-down {
  margin: 230px 0 20px;
}

/* status bar */
.status {
  display: flex;
  align-items: center;
  height: 43px;
  padding: 3px 63px 0 14px;
  gap: 26px;
  flex-shrink: 0;
  background-color: #f7f6fb;
}

.status button {
  gap: 6px;
}

.views {
  display: flex;
  align-items: center;
  gap: 14px;
  margin-left: auto;
}

.views .pressed {
  width: 32px;
  height: 36px;
  margin-left: 14px;
  background-color: #dce3e8;
}

.fit {
  margin-left: 19px;
}

.zoom-bar {
  display: flex;
  align-items: center;
  gap: 17px;
}

.zoom {
  width: 208px;
  appearance: none;
  height: 24px;
}

.zoom::-webkit-slider-runnable-track {
  height: 2px;
  background: linear-gradient(90deg, #55555c 48%, #d8d8de 48%);
}

.zoom::-webkit-slider-thumb {
  appearance: none;
  width: 18px;
  height: 18px;
  margin-top: -8px;
  border: 2px solid #55555c;
  border-radius: 50%;
  background-color: #f7f6fb;
}

/* taskbar */
.taskbar {
  display: flex;
  height: 60px;
  flex-shrink: 0;
  background: linear-gradient(90deg, #28363d 50%, #26292d 68%, #262a2e 78%, #202c34 82%);
}

.app {
  width: 63px;
  margin: 0 6px;
  border-bottom: 4px solid transparent;
}

.app.ie-app {
  margin-left: 11px;
}

.open {
  border-color: #80b4e4;
}

.app.focus {
  width: 74px;
  margin: 0;
  background-color: #515c63;
}

.ie {
  fill: #55c3f0;
  font-size: 46px;
  font-weight: 700;
}

.green-e {
  fill: white;
  font-size: 30px;
  font-weight: 700;
}

.tray {
  display: flex;
  align-items: center;
  gap: 12px;
  margin-left: auto;
  padding-right: 26px;
  color: white;
}

.cpu {
  position: relative;
  display: flex;
  flex-direction: column;
  align-items: center;
  margin-right: -4px;
}

.cpu svg {
  position: absolute;
  top: 11px;
}

.ime {
  width: 24px;
  font-size: 20px;
}

.finder {
  margin-left: 7px;
}

.clock {
  display: flex;
  flex-direction: column;
  align-items: center;
  margin: 0 18px;
}

/* floating things */
.watermark {
  position: absolute;
  right: 15px;
  bottom: 8px;
  color: rgba(225, 225, 225, 0.8);
  font-size: 20px;
}

.alert-dot {
  position: absolute;
  right: 68px;
  bottom: 51px;
  width: 8px;
  height: 6px;
  border-radius: 50%;
  background-color: #e8101c;
}

.meter {
  position: absolute;
  top: 25px;
  right: 0;
  width: 14px;
  height: 88px;
  border: 4px solid #4a4e58;
  border-right: 0;
  border-radius: 6px 0 0 6px;
  background:
    repeating-linear-gradient(transparent 0 2px, #4a4e58 2px 4px),
    linear-gradient(#6a7080 45%, #c6cf52 45%, #3fc0a0 80%);
}

.pointer {
  position: absolute;
  right: 3px;
  bottom: 350px;
}

.robot {
  position: absolute;
  right: 0;
  bottom: 59px;
}
```
